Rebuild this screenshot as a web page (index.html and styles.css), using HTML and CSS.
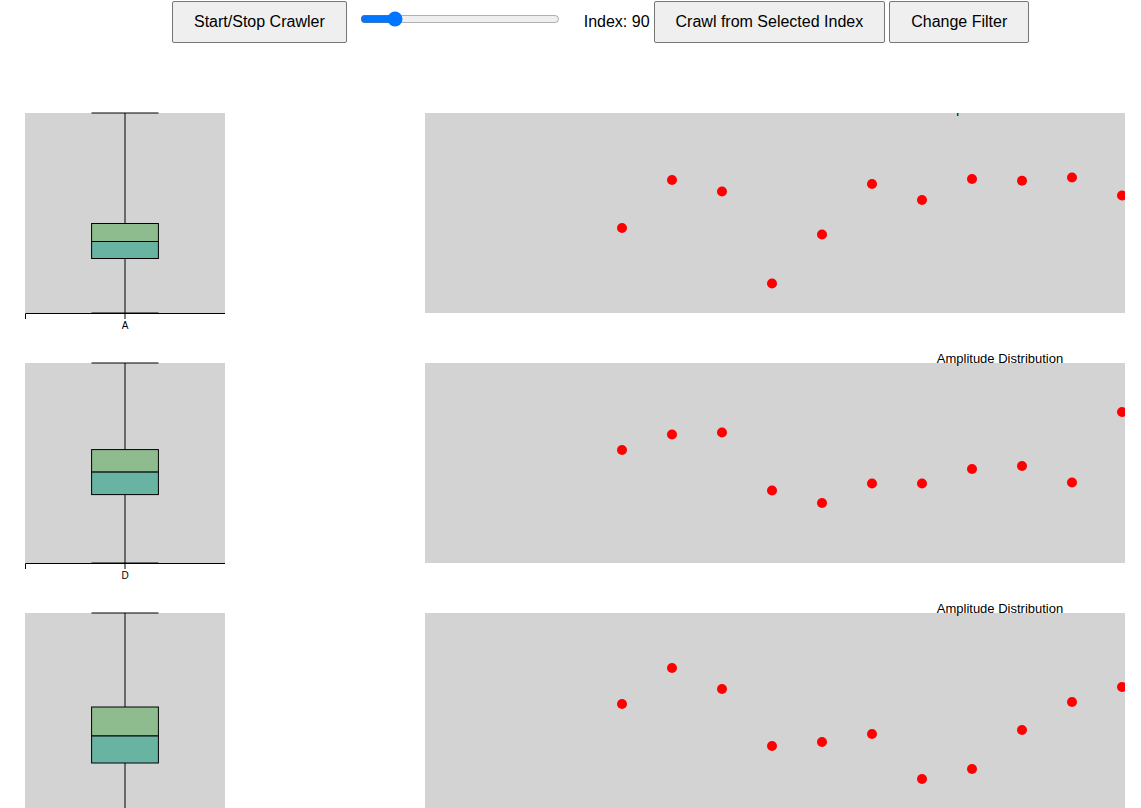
FILE: index.html
```html
<!DOCTYPE html>
<html lang="en">
<head>
<meta charset="utf-8">
<title>Crawler</title>
<link rel="stylesheet" href="styles.css">
</head>
<body>
<header class="toolbar">
  <button class="btn" type="button">Start/Stop Crawler</button>
  <input class="slider" id="index" type="range" min="0" max="610" value="90">
  <label class="index-label" for="index">Index: 90</label>
  <button class="btn" type="button">Crawl from Selected Index</button>
  <button class="btn" type="button">Change Filter</button>
</header>
<main class="rows">
  <section class="row">
    <svg class="box-plot" width="200" height="200">
      <rect class="plot-bg" width="200" height="200"/>
      <path class="axis" d="M0.5 206V200.5H200M100 200V206"/>
      <path class="line" d="M66.5 0H133.5M100 0V200M66.5 200H133.5"/>
      <rect class="upper" x="66.6" y="110.5" width="66.8" height="18"/>
      <rect class="lower" x="66.6" y="128.5" width="66.8" height="17"/>
      <text class="tick" x="100" y="216">A</text>
    </svg>
    <svg class="chart chart-clipped" height="200">
      <rect class="plot-bg" width="100%" height="200"/>
      <text class="title" x="575" y="0">Amplitude Distribution</text>
      <svg class="dots" width="100%" height="200">
        <circle cx="197" cy="115" r="5"/><circle cx="247" cy="67" r="5"/><circle cx="297" cy="78.5" r="5"/><circle cx="347" cy="170.5" r="5"/><circle cx="397" cy="121.5" r="5"/><circle cx="447" cy="71" r="5"/><circle cx="497" cy="87" r="5"/><circle cx="547" cy="66" r="5"/><circle cx="597" cy="67.7" r="5"/><circle cx="647" cy="64.5" r="5"/><circle cx="697" cy="82.5" r="5"/>
      </svg>
    </svg>
  </section>
  <section class="row">
    <svg class="box-plot" width="200" height="200">
      <rect class="plot-bg" width="200" height="200"/>
      <path class="axis" d="M0.5 206V200.5H200M100 200V206"/>
      <path class="line" d="M66.5 0H133.5M100 0V200M66.5 200H133.5"/>
      <rect class="upper" x="66.6" y="86.6" width="66.8" height="22.5"/>
      <rect class="lower" x="66.6" y="109.1" width="66.8" height="22.5"/>
      <text class="tick" x="100" y="216">D</text>
    </svg>
    <svg class="chart" height="200">
      <rect class="plot-bg" width="100%" height="200"/>
      <text class="title" x="575" y="0">Amplitude Distribution</text>
      <svg class="dots" width="100%" height="200">
        <circle cx="197" cy="87" r="5"/><circle cx="247" cy="71.5" r="5"/><circle cx="297" cy="69.5" r="5"/><circle cx="347" cy="127.5" r="5"/><circle cx="397" cy="140" r="5"/><circle cx="447" cy="120.5" r="5"/><circle cx="497" cy="120.5" r="5"/><circle cx="547" cy="106" r="5"/><circle cx="597" cy="103" r="5"/><circle cx="647" cy="119.5" r="5"/><circle cx="697" cy="49" r="5"/>
      </svg>
    </svg>
  </section>
  <section class="row">
    <svg class="box-plot" width="200" height="200">
      <rect class="plot-bg" width="200" height="200"/>
      <path class="axis" d="M0.5 206V200.5H200M100 200V206"/>
      <path class="line" d="M66.5 0H133.5M100 0V200M66.5 200H133.5"/>
      <rect class="upper" x="66.6" y="94" width="66.8" height="29"/>
      <rect class="lower" x="66.6" y="123" width="66.8" height="27"/>
    </svg>
    <svg class="chart" height="200">
      <rect class="plot-bg" width="100%" height="200"/>
      <text class="title" x="575" y="0">Amplitude Distribution</text>
      <svg class="dots" width="100%" height="200">
        <circle cx="197" cy="91" r="5"/><circle cx="247" cy="55" r="5"/><circle cx="297" cy="76" r="5"/><circle cx="347" cy="133" r="5"/><circle cx="397" cy="129" r="5"/><circle cx="447" cy="121" r="5"/><circle cx="497" cy="166" r="5"/><circle cx="547" cy="156" r="5"/><circle cx="597" cy="117" r="5"/><circle cx="647" cy="89" r="5"/><circle cx="697" cy="74" r="5"/>
      </svg>
    </svg>
  </section>
</main>
</body>
</html>
```

FILE: styles.css
```css
body {
  margin: 0;
  height: 100vh;
  overflow: hidden;
  background: #fff;
  color: #000;
  font-family: "Liberation Sans", Arial, sans-serif;
}

.toolbar {
  display: flex;
  align-items: center;
  gap: 4px;
  padding: 1px 0 0 172px;
  font-size: 16px;
  white-space: nowrap;
}

.btn {
  height: 42px;
  padding: 0 21px;
  border: 1px solid #767676;
  border-radius: 2px;
  background: #efefef;
  color: #000;
  font: inherit;
}

.slider {
  width: 200px;
  height: 16px;
  margin: 0 20px 6px 9px;
}

.rows {
  display: flex;
  flex-direction: column;
  gap: 50px;
  padding: 70px 16px 0 25px;
}

.row {
  display: flex;
  gap: 200px;
}

.box-plot {
  flex: none;
  overflow: visible;
}

.chart {
  flex: 1;
  min-width: 0;
  overflow: visible;
}

.chart-clipped,
.dots {
  overflow: hidden;
}

.plot-bg {
  fill: #d3d3d3;
}

.axis,
.line {
  fill: none;
  stroke: #000;
}

.upper,
.lower {
  stroke: #000;
}

.upper {
  fill: #8fbc8f;
}

.lower {
  fill: #69b3a2;
}

.dots {
  fill: #f00;
}

.tick {
  font-size: 10px;
  text-anchor: middle;
}

.title {
  font-size: 13px;
  text-anchor: middle;
}
```
